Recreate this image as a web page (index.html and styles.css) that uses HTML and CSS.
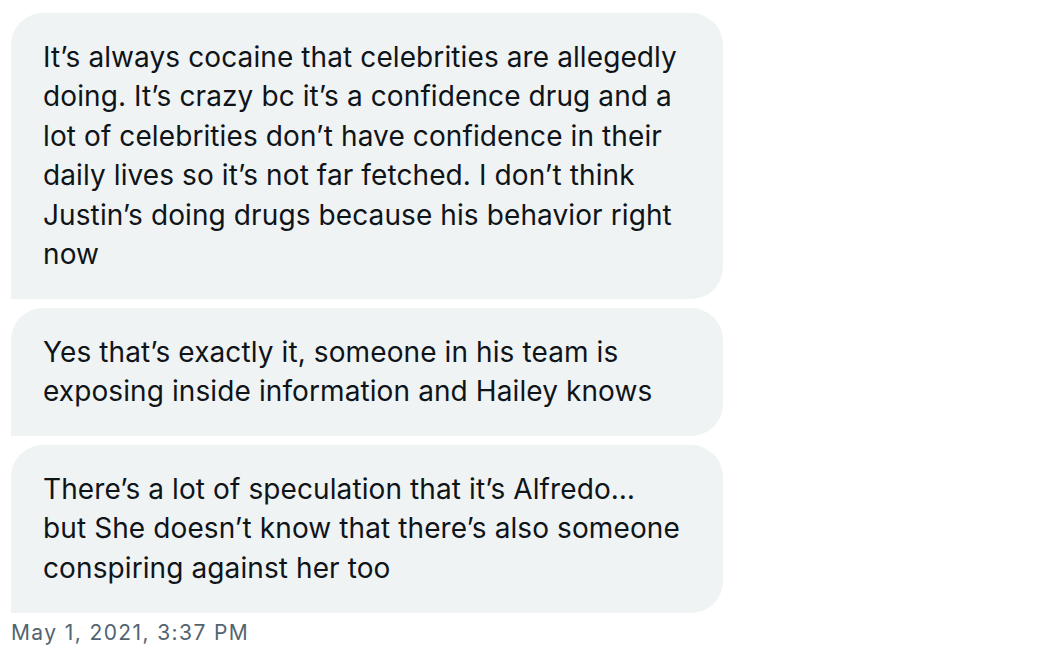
FILE: index.html
```html
<!DOCTYPE html>
<html lang="en">
<head>
<meta charset="utf-8">
<title>Messages</title>
<link rel="stylesheet" href="styles.css">
</head>
<body>
<div class="thread">
  <div class="bubble first">It’s always cocaine that celebrities are allegedly<br>doing. It’s crazy bc it’s a confidence drug and a<br>lot of celebrities don’t have confidence in their<br>daily lives so it’s not far fetched. I don’t think<br>Justin’s doing drugs because his behavior right<br>now</div>
  <div class="bubble">Yes that’s exactly it, someone in his team is<br>exposing inside information and Hailey knows</div>
  <div class="bubble">There’s a lot of speculation that it’s Alfredo…<br>but She doesn’t know that there’s also someone<br>conspiring against her too</div>
  <div class="time">May 1, 2021, 3:37 PM</div>
</div>
</body>
</html>
```
FILE: styles.css
```css
html, body {
  margin: 0;
  background: #ffffff;
}
body {
  font-family: Inter, "Noto Sans", "Liberation Sans", sans-serif;
  color: #0f1419;
}
.thread {
  padding: 13px 0 0 11px;
  width: 712px;
  display: flex;
  flex-direction: column;
  gap: 9px;
}
.bubble {
  background: #eff3f4;
  border-radius: 32px 32px 32px 0;
  padding: 24.5px 32px;
  font-size: 28px;
  letter-spacing: 0.1px;
  line-height: 39.5px;
  white-space: nowrap;
}
.time {
  margin-top: -2px;
  font-size: 21px;
  letter-spacing: 1.4px;
  line-height: 26px;
  color: #536471;
}
```
